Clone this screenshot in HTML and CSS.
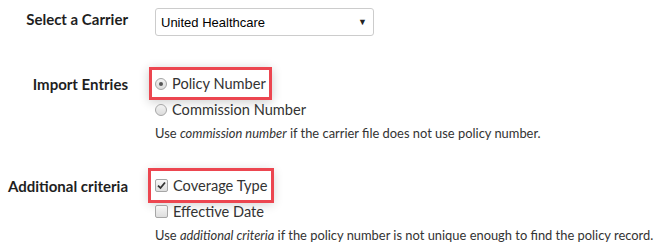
FILE: index.html
```html
<!DOCTYPE html>
<html lang="en">
<head>
    <meta charset="UTF-8">
    <title>Import Settings</title>
    <link rel="stylesheet" href="styles.css">
</head>
<body>
    <div class="form">
        <div class="row row-carrier">
            <div class="label">Select a Carrier</div>
            <div class="field">
                <div class="select">
                    <span>United Healthcare</span>
                    <span class="arrow">&#9660;</span>
                </div>
            </div>
        </div>

        <div class="row row-import">
            <div class="label">Import Entries</div>
            <div class="field">
                <label class="option marked">
                    <span class="radio checked"></span>
                    Policy Number
                </label>
                <label class="option">
                    <span class="radio"></span>
                    Commission Number
                </label>
                <p class="help">Use <em>commission number</em> if the carrier file does not use policy number.</p>
            </div>
        </div>

        <div class="row row-criteria">
            <div class="label">Additional criteria</div>
            <div class="field">
                <label class="option marked wide">
                    <span class="check checked">
                        <svg width="9" height="9" viewBox="0 0 9 9"><path d="M1 4.6 L3.5 7 L8 1.5" fill="none" stroke="#333" stroke-width="1.8"/></svg>
                    </span>
                    Coverage Type
                </label>
                <label class="option">
                    <span class="check"></span>
                    Effective Date
                </label>
                <p class="help">Use <em>additional criteria</em> if the policy number is not unique enough to find the policy record.</p>
            </div>
        </div>
    </div>
</body>
</html>
```

FILE: styles.css
```css
body {
    margin: 0;
    background-color: #ffffff;
    font-family: Lato, 'Open Sans', sans-serif;
    color: #222222;
}
.form {
    padding-top: 8px;
}
.row {
    display: grid;
    grid-template-columns: 128px 1fr;
    column-gap: 27px;
}
.label {
    text-align: right;
    font-weight: bold;
    font-size: 15px;
    color: #1f1f1f;
    padding-top: 2px;
}
.row-import {
    margin-top: 37px;
}
.row-criteria {
    margin-top: 34px;
}
.select {
    height: 26px;
    width: 206px;
    border: 1px solid #cccccc;
    border-radius: 3px;
    display: flex;
    align-items: center;
    justify-content: space-between;
    padding: 0 6px 0 5px;
    font-family: 'Liberation Sans', Arial, sans-serif;
    font-size: 13px;
    color: #000000;
}
.arrow {
    font-size: 9px;
    color: #222222;
}
.field {
    display: flex;
    flex-direction: column;
    align-items: flex-start;
}
.option {
    display: inline-flex;
    align-items: center;
    gap: 5px;
    height: 21px;
    margin-bottom: 5px;
    font-size: 14.6px;
    color: #333333;
}
.option.marked {
    outline: 3px solid #ec4650;
    outline-offset: 3px;
    box-shadow: 0 0 0 6px #ffffff, 0 2px 10px 6px rgba(0, 0, 0, 0.2);
}
.option.marked.wide {
    outline-offset: 4px;
}
.radio {
    width: 10px;
    height: 10px;
    border: 1px solid #a6a6a6;
    border-radius: 50%;
    background: linear-gradient(#f2f2f2, #dcdcdc);
    display: flex;
    align-items: center;
    justify-content: center;
}
.radio.checked::after {
    content: "";
    width: 4px;
    height: 4px;
    border-radius: 50%;
    background-color: #555555;
}
.check {
    width: 11px;
    height: 11px;
    border: 1px solid #a6a6a6;
    border-radius: 2px;
    background: linear-gradient(#f6f6f6, #dedede);
    display: flex;
    align-items: center;
    justify-content: center;
}
.help {
    margin: 0;
    font-size: 12.9px;
    white-space: nowrap;
    color: #333333;
}
```
